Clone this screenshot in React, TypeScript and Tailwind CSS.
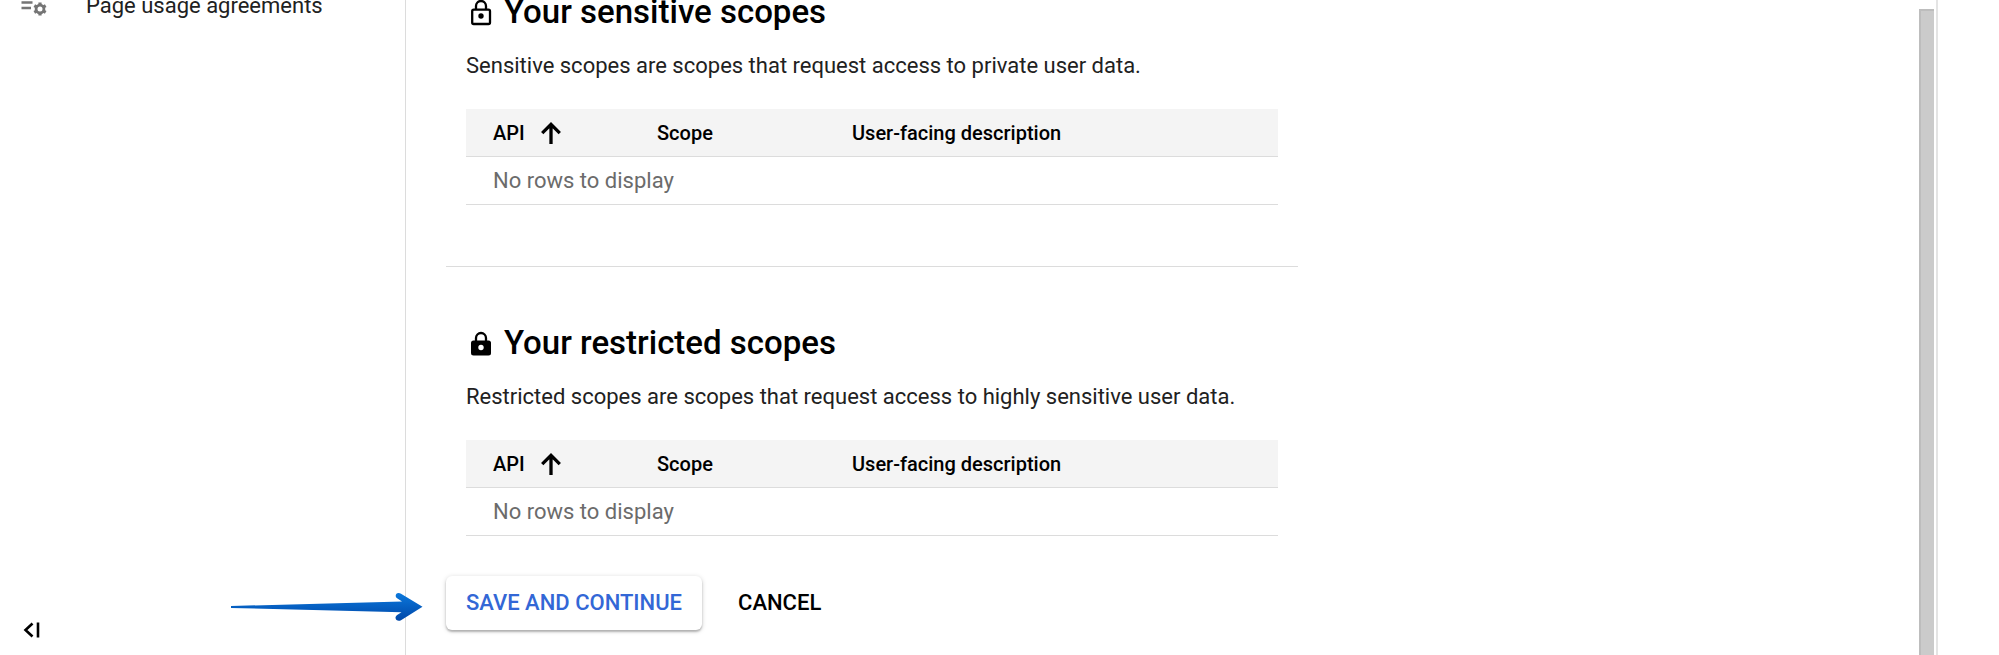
import type React from "react"

export default function App() {
  return (
    <div className="relative flex h-screen overflow-hidden bg-white font-[Roboto,sans-serif] text-[22px] leading-6 text-black">
      <Sidebar />
      <main className="min-w-0 flex-1 pl-10">
        <div className="max-w-[852px]">
          <ScopeSection
            icon={<LockOutline />}
            title="Your sensitive scopes"
            description="Sensitive scopes are scopes that request access to private user data."
          />
          <hr className="mt-[61px] mb-16 border-[#dcdcdc]" />
          <ScopeSection
            icon={<LockFilled />}
            title="Your restricted scopes"
            description="Restricted scopes are scopes that request access to highly sensitive user data."
          />
          <div className="mt-10 flex items-center gap-4">
            <button
              type="button"
              className="h-[54px] rounded-md bg-white px-5 font-medium whitespace-nowrap text-[#3367d6] shadow-[0_2px_2px_rgba(0,0,0,0.22),0_1px_5px_rgba(0,0,0,0.18)]"
            >
              SAVE AND CONTINUE
            </button>
            <button type="button" className="h-[54px] px-5 font-medium">
              CANCEL
            </button>
          </div>
        </div>
      </main>
      <div className="flex w-[19px] flex-shrink-0 flex-col border-r-2 border-[#e4e4e4] pt-[9px]">
        <div className="w-[15px] flex-1 border-t-2 border-l-2 border-[#bdbdbd] bg-[#cbcbcb]" />
      </div>
      <div className="w-[61px] flex-shrink-0" />
      <PointerArrow />
    </div>
  )
}

function Sidebar() {
  return (
    <aside className="flex w-[406px] flex-shrink-0 flex-col justify-between border-r border-[#dcdcdc]">
      <nav className="-mt-1.5">
        <a href="#" className="flex items-center gap-[38px] pl-5 text-[#212121]">
          <AgreementsIcon />
          Page usage agreements
        </a>
      </nav>
      <button type="button" aria-label="Collapse menu" className="mb-[9px] ml-4 flex h-8 w-8 items-center justify-center">
        <svg viewBox="0 0 18 18" className="h-[18px] w-[18px]" fill="none" stroke="currentColor" strokeWidth="2.6">
          <path d="M9.5 2.5L2.5 9l7 6.5M15 1.5v15" />
        </svg>
      </button>
    </aside>
  )
}

interface ScopeSectionProps {
  icon: React.ReactNode
  title: string
  description: string
}

function ScopeSection({ icon, title, description }: ScopeSectionProps) {
  return (
    <section className="px-5">
      <h2 className="flex h-6 items-center gap-2 text-[33px] leading-6 font-medium">
        {icon}
        {title}
      </h2>
      <p className="mt-[30px] mb-[31px] text-[#212121]">{description}</p>
      <table className="w-full table-fixed border-separate border-spacing-0 text-left">
        <thead className="bg-[#f4f4f4] text-[20px]">
          <tr className="h-12">
            <th className="w-[164px] border-b border-[#dcdcdc] pl-[27px] font-medium">
              <span className="flex items-center gap-4">
                API
                <SortArrow />
              </span>
            </th>
            <th className="w-[195px] border-b border-[#dcdcdc] pl-[27px] font-medium">Scope</th>
            <th className="border-b border-[#dcdcdc] pl-[27px] font-medium">User-facing description</th>
          </tr>
        </thead>
        <tbody>
          <tr className="h-12">
            <td colSpan={3} className="border-b border-[#dcdcdc] pl-[27px] text-[#6b6b6b]">
              No rows to display
            </td>
          </tr>
        </tbody>
      </table>
    </section>
  )
}

function LockOutline() {
  return (
    <svg viewBox="0 0 30 30" className="h-[30px] w-[30px]" fill="none" stroke="currentColor" strokeWidth="2.3">
      <rect x="6.2" y="12.7" width="17.8" height="14.3" rx="1.5" />
      <path d="M10 12.5V9a5 5 0 0 1 10 0v3.5" />
      <circle cx="15" cy="19" r="2.7" fill="currentColor" stroke="none" />
    </svg>
  )
}

function LockFilled() {
  return (
    <svg viewBox="0 0 30 30" className="h-[30px] w-[30px]" fill="none" stroke="currentColor" strokeWidth="2.3">
      <path d="M10 14V10a5 5 0 0 1 10 0v4" />
      <rect x="5" y="12.5" width="20" height="15" rx="2.5" fill="currentColor" stroke="none" />
      <circle cx="15" cy="19.5" r="2.7" fill="#fff" stroke="none" />
    </svg>
  )
}

function SortArrow() {
  return (
    <svg viewBox="0 0 20 22" className="h-[22px] w-5" fill="none" stroke="currentColor" strokeWidth="3.3">
      <path d="M10 22V2.500M1.200 11.200L10 2.400l8.800 8.800" />
    </svg>
  )
}

function AgreementsIcon() {
  return (
    <svg viewBox="0 0 28 20" className="h-5 w-7" fill="none" stroke="#757575">
      <path d="M1.5 6.5h11M1.5 12h9.5" strokeWidth="2.4" />
      <circle cx="20" cy="13" r="3.9" strokeWidth="2.8" />
      <path
        d="M20 6.4v3M20 16.6v3M14.3 9.7l2.6 1.5M23.1 14.8l2.6 1.5M14.3 16.3l2.6-1.5M23.1 11.2l2.6-1.5"
        strokeWidth="3.2"
      />
    </svg>
  )
}

// blue pointer toward the save button
function PointerArrow() {
  return (
    <svg
      viewBox="0 0 192 30"
      className="pointer-events-none absolute bottom-[33px] left-[231px] h-[30px] w-48"
      aria-hidden="true"
    >
      <defs>
        <linearGradient id="pointer" x1="0" y1="0" x2="0" y2="1">
          <stop offset="0" stopColor="#0b78dc" />
          <stop offset="1" stopColor="#0047a8" />
        </linearGradient>
      </defs>
      <path
        d="M0 14L171 9.500L166.500 6.500C163.500 4.500 164.500 1.200 167.500 1C168.500 1 169.300 1.300 170 1.700L191.500 14.800L170 28.200C167 29.800 164 27.700 164.600 25C164.900 24 165.600 23.300 166.500 22.700L170.500 20.200L0 16Z"
        fill="url(#pointer)"
      />
    </svg>
  )
}
